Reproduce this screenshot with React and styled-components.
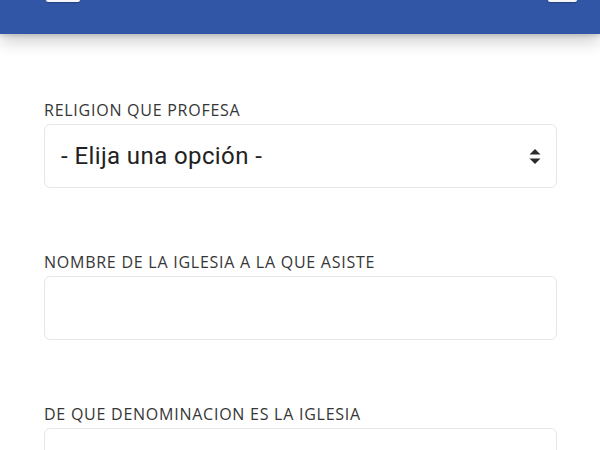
import React from "react";
import styled, { createGlobalStyle } from "styled-components";

const Global = createGlobalStyle`
  html, body { margin: 0; padding: 0; background: #ffffff; }
  body { font-family: Roboto, "Noto Sans", Arial, sans-serif; overflow: hidden; }
`;

const Page = styled.div`
  width: 600px;
  height: 450px;
  overflow: hidden;
  background: #ffffff;
`;

const Header = styled.header`
  position: relative;
  z-index: 1;
  height: 34px;
  background: #3156a6;
  box-shadow: 0 6px 18px rgba(0, 0, 0, 0.22), 0 2px 4px rgba(0, 0, 0, 0.12);
  display: flex;
  justify-content: space-between;
  align-items: flex-start;
  padding: 0 23px 0 46px;
`;

const HeaderIcon = styled.div`
  width: ${(p) => p.$w}px;
  height: 2px;
  background: #f4f6fb;
  border-radius: 0 0 2px 2px;
  box-shadow: 0 1px 1px rgba(0, 0, 0, 0.25);
`;

const Form = styled.form`
  display: flex;
  flex-direction: column;
  gap: 64px;
  padding: 66px 43px 0 44px;
`;

const Field = styled.div`
  display: flex;
  flex-direction: column;
  gap: 4px;
`;

const Label = styled.label`
  font-family: "Open Sans", Roboto, sans-serif;
  font-size: 16px;
  line-height: 20px;
  color: #363636;
  letter-spacing: 0.75px;
`;

const Box = styled.div`
  box-sizing: border-box;
  height: 64px;
  border: 1.5px solid #e6e6e6;
  border-radius: 6px;
  background: #ffffff;
  display: flex;
  align-items: center;
  justify-content: space-between;
  padding: 0 15px 0 16px;
`;

const SelectText = styled.span`
  font-size: 24px;
  color: #222222;
  letter-spacing: 0.4px;
`;

const SortIcon = () => (
  <svg width="12" height="15" viewBox="0 0 12 15">
    <path d="M6 0 L11.5 5.5 L0.5 5.5 Z" fill="#2b2b2b" />
    <path d="M6 15 L11.5 9.5 L0.5 9.5 Z" fill="#2b2b2b" />
  </svg>
);

export default function App() {
  return (
    <Page>
      <Global />
      <Header>
        <HeaderIcon $w={34} />
        <HeaderIcon $w={29} />
      </Header>
      <Form>
        <Field>
          <Label>RELIGION QUE PROFESA</Label>
          <Box>
            <SelectText>- Elija una opción -</SelectText>
            <SortIcon />
          </Box>
        </Field>
        <Field>
          <Label>NOMBRE DE LA IGLESIA A LA QUE ASISTE</Label>
          <Box />
        </Field>
        <Field>
          <Label>DE QUE DENOMINACION ES LA IGLESIA</Label>
          <Box />
        </Field>
      </Form>
    </Page>
  );
}
